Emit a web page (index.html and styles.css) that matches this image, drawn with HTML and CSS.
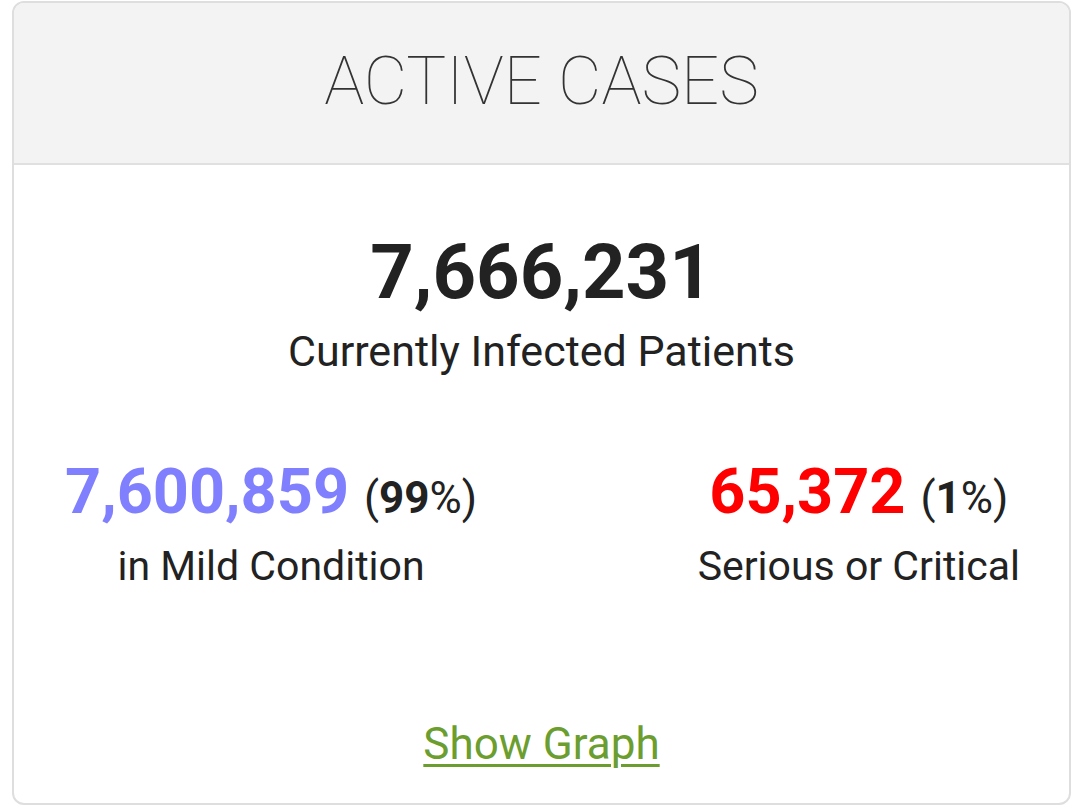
FILE: index.html
```html
<!DOCTYPE html>
<html>
<head>
<meta charset="utf-8">
<link rel="stylesheet" href="styles.css">
</head>
<body>
<div class="card">
  <div class="card-header">
    <h1 class="title">ACTIVE CASES</h1>
  </div>
  <div class="card-body">
    <div class="total">7,666,231</div>
    <div class="total-label">Currently Infected Patients</div>
    <div class="split">
      <div class="col">
        <div class="num-line"><span class="num mild">7,600,859</span><span class="pct">(<strong>99</strong>%)</span></div>
        <div class="col-label">in Mild Condition</div>
      </div>
      <div class="col">
        <div class="num-line"><span class="num critical">65,372</span><span class="pct">(<strong>1</strong>%)</span></div>
        <div class="col-label">Serious or Critical</div>
      </div>
    </div>
    <div class="graph-link"><a href="#" class="show-graph">Show Graph</a></div>
  </div>
</div>
</body>
</html>
```
FILE: styles.css
```css
html, body {
  margin: 0;
  padding: 0;
  background: #ffffff;
}
body {
  font-family: Roboto, "Liberation Sans", sans-serif;
  color: #222222;
  padding: 1px 9px 2px 12px;
  height: 807px;
  box-sizing: border-box;
}
.card {
  border: 2px solid #dedede;
  border-radius: 12px;
  overflow: hidden;
  height: 804px;
  box-sizing: border-box;
  display: flex;
  flex-direction: column;
  background: #ffffff;
}
.card-header {
  background: #f3f3f3;
  border-bottom: 2px solid #e0e0e0;
  height: 162px;
  box-sizing: border-box;
  display: flex;
  align-items: flex-start;
  justify-content: center;
}
.title {
  margin: 0;
  padding-top: 38px;
  font-size: 67px;
  font-weight: 100;
  line-height: 80px;
  color: #333333;
}
.card-body {
  flex: 1;
  display: flex;
  flex-direction: column;
  align-items: stretch;
  text-align: center;
}
.total {
  margin-top: 62px;
  font-size: 76px;
  font-weight: 700;
  line-height: 90px;
  color: #222222;
}
.total-label {
  margin-top: 6px;
  font-size: 43px;
  line-height: 56px;
  color: #222222;
}
.split {
  display: flex;
  justify-content: space-between;
  padding: 0 49px 0 51px;
  margin-top: 79px;
}
.col {
  text-align: center;
}
.num-line {
  line-height: 67px;
  white-space: nowrap;
}
.num {
  font-size: 63px;
  font-weight: 700;
}
.mild { color: #8080ff; }
.critical { color: #ff0000; }
.pct {
  margin-left: 15px;
  font-size: 44px;
  font-weight: 400;
  color: #222222;
}
.pct strong { font-weight: 700; }
.col-label {
  margin-top: -3px;
  font-size: 41px;
  line-height: 56px;
  color: #222222;
}
.graph-link {
  margin-top: auto;
  padding-bottom: 31px;
}
.show-graph {
  font-size: 44px;
  line-height: 56px;
  color: #6b9e2e;
  text-decoration: underline;
  text-decoration-thickness: 3px;
  text-underline-offset: 5px;
}
```
